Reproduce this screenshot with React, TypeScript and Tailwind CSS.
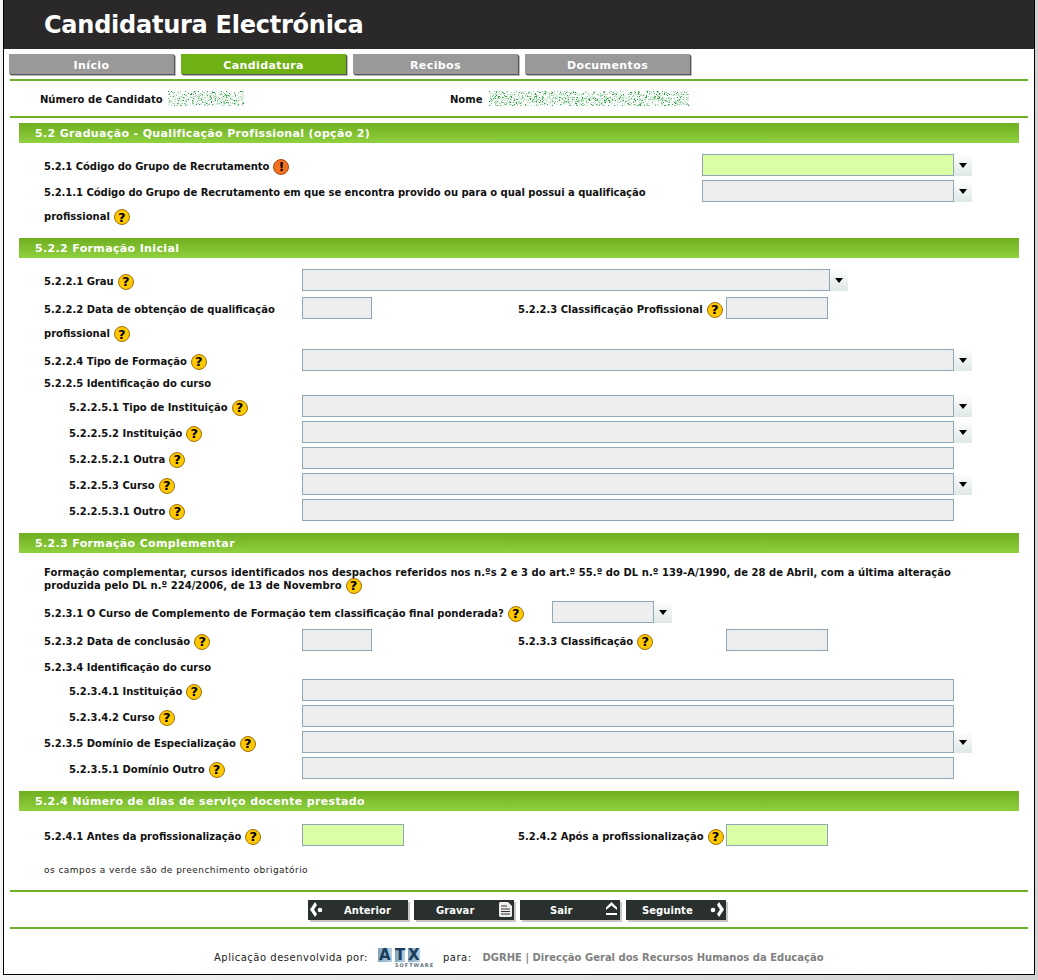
import React from "react";

function rng(seed: number) {
  let s = seed;
  return () => {
    s = (s * 16807) % 2147483647;
    return s / 2147483647;
  };
}

function Noise({ width, height, seed }: { width: number; height: number; seed: number }) {
  const r = rng(seed);
  const cells: React.ReactNode[] = [];
  for (let y = 0; y < height; y++) {
    for (let x = 0; x < width; x++) {
      const v = r();
      const edge = Math.abs(y - height / 2) / (height / 2);
      if (v < 0.55 - edge * 0.25) {
        const c = v < 0.06 ? "#2f9e44" : v < 0.2 ? "#8fd09a" : "#d3eed8";
        cells.push(<rect key={x + "-" + y} x={x} y={y} width={1} height={1} fill={c} />);
      }
    }
  }
  return (
    <svg width={width} height={height} className="block">
      {cells}
    </svg>
  );
}

function Mark({ type = "q" }: { type?: "q" | "e" }) {
  const e = type === "e";
  return (
    <span
      className={
        "inline-flex h-4 w-4 shrink-0 items-center justify-center rounded-full border text-[13px] font-bold leading-none text-black " +
        (e ? "border-[#a84a10] bg-[#f5701f]" : "border-[#a0700a] bg-[#ffc800]")
      }
    >
      {e ? "!" : "?"}
    </span>
  );
}

function Section({ children }: { children: React.ReactNode }) {
  return (
    <div className="ml-[15px] flex h-5 w-[1000px] items-center bg-gradient-to-b from-[#6fae1f] to-[#90d13f] pl-4 text-[11px] font-bold tracking-[0.35px] text-white">
      {children}
    </div>
  );
}

function Field({ w, green = false }: { w: string; green?: boolean }) {
  return (
    <div
      className={
        "h-[22px] shrink-0 border border-[#8fa6b5] " + w + " " + (green ? "bg-[#dcffa6]" : "bg-[#eeeeee]")
      }
    />
  );
}

function Select({ w, green = false }: { w: string; green?: boolean }) {
  return (
    <div className="flex h-[22px] shrink-0">
      <Field w={w} green={green} />
      <div className="flex h-[22px] w-[18px] items-center justify-center bg-gradient-to-b from-white to-[#dfe7e7]">
        <svg width="8" height="5" viewBox="0 0 8 5">
          <path d="M0 0h8L4 5z" fill="#000" />
        </svg>
      </div>
    </div>
  );
}

function Label({
  children,
  mark,
  indent = false,
  w,
  tight = false,
}: {
  children: React.ReactNode;
  mark?: "q" | "e";
  indent?: boolean;
  w?: string;
  tight?: boolean;
}) {
  return (
    <div
      className={
        "flex shrink-0 items-center gap-1 pt-[3px] " +
        (indent ? "pl-[50px] " : "pl-[25px] ") +
        (w ?? "w-[283px]") +
        (tight ? " tracking-[-0.04px]" : "")
      }
    >
      <span>{children}</span>
      {mark && <Mark type={mark} />}
    </div>
  );
}

function Row({ children, mt }: { children: React.ReactNode; mt: string }) {
  return <div className={"ml-[15px] flex h-[22px] items-center " + mt}>{children}</div>;
}

function SelRow({ label, indent = false, mt = "mt-1" }: { label: string; indent?: boolean; mt?: string }) {
  return (
    <Row mt={mt}>
      <Label mark="q" indent={indent}>
        {label}
      </Label>
      <Select w="w-[652px]" />
    </Row>
  );
}

function InRow({ label, indent = false, mt = "mt-1" }: { label: string; indent?: boolean; mt?: string }) {
  return (
    <Row mt={mt}>
      <Label mark="q" indent={indent}>
        {label}
      </Label>
      <Field w="w-[652px]" />
    </Row>
  );
}

function SecondLabel({ ml, children }: { ml: string; children: React.ReactNode }) {
  return (
    <div className={"flex w-[208px] shrink-0 items-center gap-1 pt-[3px] " + ml}>
      <span>{children}</span>
      <Mark />
    </div>
  );
}

function Tab({ label, active = false }: { label: string; active?: boolean }) {
  return (
    <div
      className={
        "flex h-5 w-[165px] items-center justify-center pt-[2px] text-[11px] font-bold tracking-[0.4px] text-white shadow-[1px_1px_0_#555,2px_2px_0_#bbb] " +
        (active ? "bg-[#6fb114]" : "bg-[#999999]")
      }
    >
      {label}
    </div>
  );
}

function Btn({ label, icon, textClass }: { label: string; icon: React.ReactNode; textClass: string }) {
  return (
    <div className="relative flex h-5 w-[100px] items-center bg-[#29302d] pt-[2px] text-[10px] font-bold tracking-[0.05px] text-white shadow-[2px_2px_0_#c8c8c8]">
      <span className={textClass}>{label}</span>
      {icon}
    </div>
  );
}

function Logo() {
  return (
    <div className="ml-[10px] flex w-[54px] flex-col font-bold text-[#1a3e5c]">
      <div className="flex h-[14px] text-[15px] leading-[14px]">
        <span className="w-[14px] bg-gradient-to-r from-[#7fa6c2] to-[#b9d0e0] text-center">A</span>
        <span className="ml-[3px] w-[10px] bg-gradient-to-r from-[#7fa6c2] to-[#b9d0e0] text-center">T</span>
        <span className="ml-[3px] w-[12px] bg-gradient-to-r from-[#7fa6c2] to-[#b9d0e0] text-center">X</span>
      </div>
      <div className="mt-px pl-[17px] text-[5px] leading-[5px] tracking-[1px] text-[#5a7080]">SOFTWARE</div>
    </div>
  );
}

export default function App() {
  return (
    <div className="h-[980px] w-[1038px] overflow-hidden bg-gradient-to-r from-[#f4f4f4] to-[#d2d2d2] pl-[3px] font-['DejaVu_Sans','Liberation_Sans',sans-serif]">
      <div className="h-[975px] w-[1032px] border-b border-r border-l border-black bg-white text-[10px] font-bold leading-none text-[#111]">
        <div className="flex h-[49px] items-center bg-[#2a2829] pl-10 text-[24px] font-bold tracking-[-0.25px] text-white">
          Candidatura Electrónica
        </div>
        <div className="ml-[5px] mt-[5px] flex gap-[7px]">
          <Tab label="Início" />
          <Tab label="Candidatura" active />
          <Tab label="Recibos" />
          <Tab label="Documentos" />
        </div>
        <div className="ml-[6px] mt-[5px] h-[2px] w-[1018px] bg-[#71af26]" />
        <div className="flex h-[35px] items-center pl-9 font-bold">
          <span className="w-[128px] pt-[3px]">Número de Candidato</span>
          <Noise width={76} height={15} seed={11} />
          <span className="ml-[206px] w-[39px] pt-[3px]">Nome</span>
          <Noise width={200} height={15} seed={37} />
        </div>
        <div className="ml-[6px] h-[2px] w-[1018px] bg-[#71af26]" />
        <div className="mt-[5px]">
          <Section>5.2 Graduação - Qualificação Profissional (opção 2)</Section>
        </div>
        <Row mt="mt-[11px]">
          <Label mark="e" w="w-[683px]" tight>
            5.2.1 Código do Grupo de Recrutamento
          </Label>
          <Select w="w-[252px]" green />
        </Row>
        <Row mt="mt-1">
          <Label w="w-[683px]" tight>
            5.2.1.1 Código do Grupo de Recrutamento em que se encontra provido ou para o qual possui a qualificação
          </Label>
          <Select w="w-[252px]" />
        </Row>
        <div className="ml-10 mt-[7px] flex h-4 items-center gap-1">
          profissional <Mark />
        </div>
        <div className="mt-[13px]">
          <Section>5.2.2 Formação Inicial</Section>
        </div>
        <Row mt="mt-[11px]">
          <Label mark="q">5.2.2.1 Grau</Label>
          <Select w="w-[528px]" />
        </Row>
        <Row mt="mt-[6px]">
          <Label>5.2.2.2 Data de obtenção de qualificação</Label>
          <Field w="w-[70px]" />
          <SecondLabel ml="ml-[146px]">5.2.2.3 Classificação Profissional</SecondLabel>
          <Field w="w-[102px]" />
        </Row>
        <div className="ml-10 mt-[7px] flex h-4 items-center gap-1">
          profissional <Mark />
        </div>
        <SelRow label="5.2.2.4 Tipo de Formação" mt="mt-[7px]" />
        <div className="ml-[40px] mt-[8px] flex h-[10px] items-center">5.2.2.5 Identificação do curso</div>
        <SelRow label="5.2.2.5.1 Tipo de Instituição" indent mt="mt-[6px]" />
        <SelRow label="5.2.2.5.2 Instituição" indent />
        <InRow label="5.2.2.5.2.1 Outra" indent />
        <SelRow label="5.2.2.5.3 Curso" indent />
        <InRow label="5.2.2.5.3.1 Outro" indent />
        <div className="mt-3">
          <Section>5.2.3 Formação Complementar</Section>
        </div>
        <div className="ml-10 mt-[13px] w-[930px] leading-[13px] tracking-[0.04px]">
          <div className="h-[13px]">
            Formação complementar, cursos identificados nos despachos referidos nos n.ºs 2 e 3 do art.º 55.º do DL n.º
            139-A/1990, de 28 de Abril, com a última alteração
          </div>
          <div className="flex h-[13px] items-center gap-1">
            produzida pelo DL n.º 224/2006, de 13 de Novembro <Mark />
          </div>
        </div>
        <Row mt="mt-[9px]">
          <Label mark="q" w="w-[533px]">
            5.2.3.1 O Curso de Complemento de Formação tem classificação final ponderada?
          </Label>
          <Select w="w-[102px]" />
        </Row>
        <Row mt="mt-[6px]">
          <Label mark="q">5.2.3.2 Data de conclusão</Label>
          <Field w="w-[70px]" />
          <SecondLabel ml="ml-[146px]">5.2.3.3 Classificação</SecondLabel>
          <Field w="w-[102px]" />
        </Row>
        <div className="ml-[40px] mt-[12px] flex h-[10px] items-center">5.2.3.4 Identificação do curso</div>
        <InRow label="5.2.3.4.1 Instituição" indent mt="mt-[6px]" />
        <InRow label="5.2.3.4.2 Curso" indent />
        <SelRow label="5.2.3.5 Domínio de Especialização" />
        <InRow label="5.2.3.5.1 Domínio Outro" indent />
        <div className="mt-[12px]">
          <Section>5.2.4 Número de dias de serviço docente prestado</Section>
        </div>
        <Row mt="mt-[13px]">
          <Label mark="q">5.2.4.1 Antes da profissionalização</Label>
          <Field w="w-[102px]" green />
          <SecondLabel ml="ml-[114px]">5.2.4.2 Após a profissionalização</SecondLabel>
          <Field w="w-[102px]" green />
        </Row>
        <div className="ml-10 mt-5 text-[9px] font-normal tracking-[0.46px] text-[#222]">
          os campos a verde são de preenchimento obrigatório
        </div>
        <div className="ml-[6px] mt-[15px] h-[2px] w-[1018px] bg-[#71af26]" />
        <div className="ml-[304px] mt-2 flex gap-[6px]">
          <Btn
            label="Anterior"
            textClass="ml-9"
            icon={
              <svg className="absolute left-0 top-0" width="16" height="20" viewBox="0 0 16 20">
                <path d="M7 2L2 9.500 7 17l2-3-3-4.500L9 5z" fill="#fff" />
                <circle cx="12" cy="10" r="2.300" fill="#fff" />
              </svg>
            }
          />
          <Btn
            label="Gravar"
            textClass="ml-[22px]"
            icon={
              <svg className="absolute right-[2px] top-[2px]" width="13" height="15" viewBox="0 0 13 15">
                <path d="M1 0h8l4 4v10l-1 1H1l-1-1V1z" fill="#eeeeee" />
                <path d="M2 4h6M2 7h9M2 9.500h9M2 12h9" stroke="#333" strokeWidth="1" />
              </svg>
            }
          />
          <Btn
            label="Sair"
            textClass="ml-[30px]"
            icon={
              <svg className="absolute right-[3px] top-[2px]" width="11" height="14" viewBox="0 0 11 14">
                <path d="M5.500 0L11 5.500V8L5.500 3.500 0 8V5.500z" fill="#fff" />
                <path d="M0 11h11v2H0z" fill="#fff" />
              </svg>
            }
          />
          <Btn
            label="Seguinte"
            textClass="ml-[16px]"
            icon={
              <svg className="absolute right-0 top-0" width="16" height="20" viewBox="0 0 16 20">
                <path d="M9 2l5 7.500L9 17l-2-3 3-4.500L7 5z" fill="#fff" />
                <circle cx="3" cy="10" r="2.300" fill="#fff" />
              </svg>
            }
          />
        </div>
        <div className="ml-[6px] mt-[7px] h-[2px] w-[1018px] bg-[#71af26]" />
        <div className="ml-[210px] mt-[16px] flex h-[26px] items-center text-[10px] font-normal tracking-[0.5px] text-[#222]">
          <span>Aplicação desenvolvida por:</span>
          <Logo />
          <span className="ml-[11px]">para:</span>
          <span className="ml-[11px] font-bold tracking-normal text-[#808080]">
            DGRHE | Direcção Geral dos Recursos Humanos da Educação
          </span>
        </div>
      </div>
    </div>
  );
}
